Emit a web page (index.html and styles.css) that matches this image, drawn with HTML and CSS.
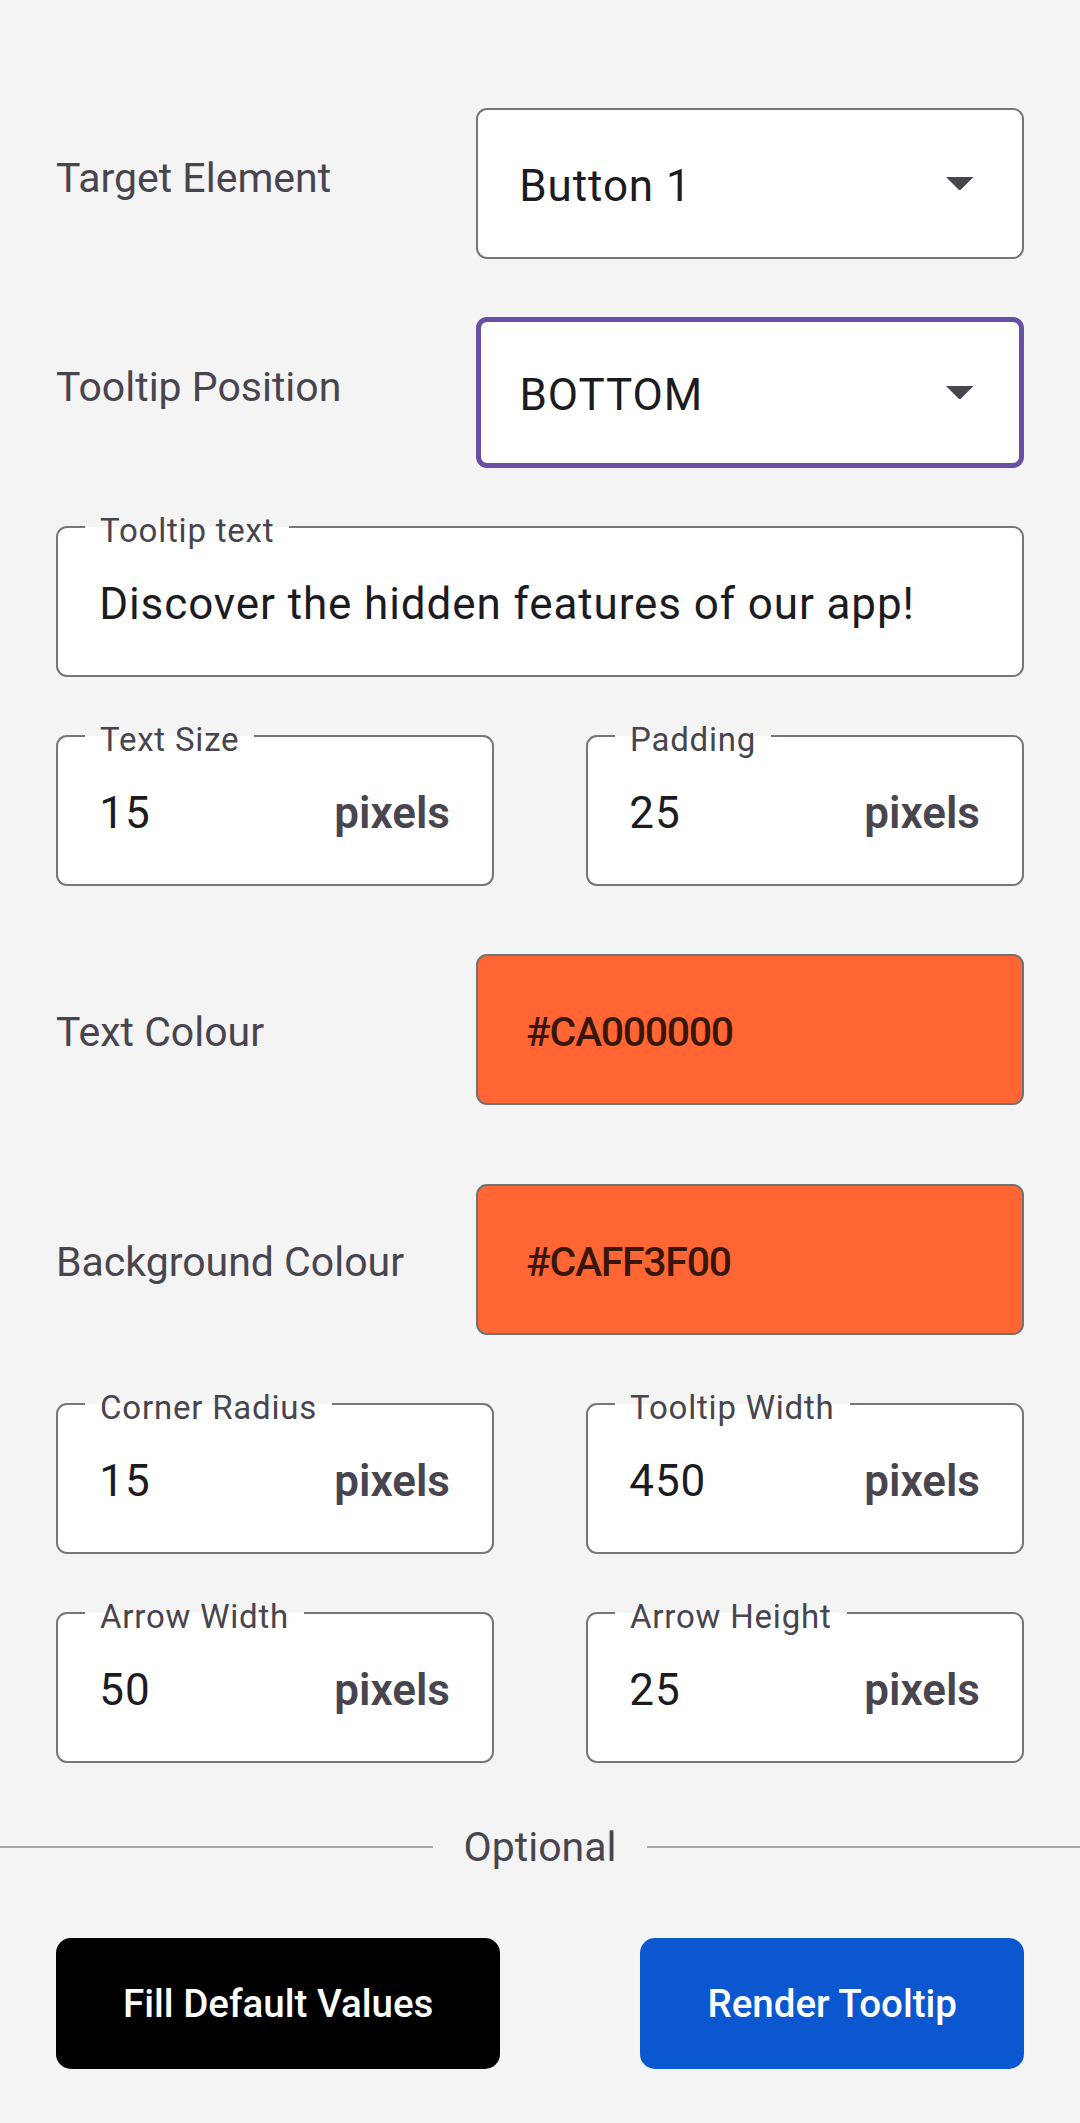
FILE: index.html
```html
<!DOCTYPE html>
<html lang="en">
<head>
<meta charset="utf-8">
<title>Tooltip Settings</title>
<link rel="stylesheet" href="styles.css">
</head>
<body>
<main class="form">
  <div class="row">
    <span class="row-label row-label--raised">Target Element</span>
    <div class="field select">
      <span class="value">Button 1</span>
      <svg class="caret" viewBox="0 0 10 5"><path d="M0 0L5 5L10 0Z"/></svg>
    </div>
  </div>

  <div class="row">
    <span class="row-label row-label--raised">Tooltip Position</span>
    <div class="field select focused">
      <span class="value">BOTTOM</span>
      <svg class="caret" viewBox="0 0 10 5"><path d="M0 0L5 5L10 0Z"/></svg>
    </div>
  </div>

  <div class="field outlined">
    <span class="float-label">Tooltip text</span>
    <span class="value">Discover the hidden features of our app!</span>
  </div>

  <div class="pair">
    <div class="field outlined">
      <span class="float-label">Text Size</span>
      <span class="value">15</span>
      <span class="suffix">pixels</span>
    </div>
    <div class="field outlined">
      <span class="float-label">Padding</span>
      <span class="value">25</span>
      <span class="suffix">pixels</span>
    </div>
  </div>

  <div class="row spaced">
    <span class="row-label row-label--lowered">Text Colour</span>
    <div class="field select swatch">
      <span class="value">#CA000000</span>
    </div>
  </div>

  <div class="row spaced-lg">
    <span class="row-label row-label--lowered">Background Colour</span>
    <div class="field select swatch">
      <span class="value">#CAFF3F00</span>
    </div>
  </div>

  <div class="pair spaced">
    <div class="field outlined">
      <span class="float-label">Corner Radius</span>
      <span class="value">15</span>
      <span class="suffix">pixels</span>
    </div>
    <div class="field outlined">
      <span class="float-label">Tooltip Width</span>
      <span class="value">450</span>
      <span class="suffix">pixels</span>
    </div>
  </div>

  <div class="pair">
    <div class="field outlined">
      <span class="float-label">Arrow Width</span>
      <span class="value">50</span>
      <span class="suffix">pixels</span>
    </div>
    <div class="field outlined">
      <span class="float-label">Arrow Height</span>
      <span class="value">25</span>
      <span class="suffix">pixels</span>
    </div>
  </div>

  <div class="divider">
    <span class="rule"></span>
    <span class="divider-text">Optional</span>
    <span class="rule"></span>
  </div>

  <div class="actions">
    <button class="btn btn-dark" type="button">Fill Default Values</button>
    <button class="btn btn-primary" type="button">Render Tooltip</button>
  </div>
</main>
</body>
</html>
```

FILE: styles.css
```css
html, body {
  margin: 0;
  background: #F4F4F4;
}

body {
  font-family: Roboto, "Noto Sans", "Liberation Sans", sans-serif;
  color: #1C1B1F;
}

.form {
  padding: 108px 56px 53px;
  display: flex;
  flex-direction: column;
}

.form > * + * {
  margin-top: 58px;
}

.form > .spaced {
  margin-top: 68px;
}

.form > .spaced-lg {
  margin-top: 79px;
}

.row {
  display: flex;
  align-items: center;
}

.row-label {
  flex: 1;
  font-size: 41px;
  line-height: 48px;
  letter-spacing: 0;
  color: #49454F;
}

.row-label--raised {
  margin-bottom: 11px;
}

.row-label--lowered {
  margin-top: 5px;
}

.field {
  position: relative;
  box-sizing: border-box;
  height: 151px;
  border: 2.75px solid #79747E;
  border-radius: 11px;
  background: #FFFFFF;
  display: flex;
  align-items: center;
  padding: 4px 42px 0 41.25px;
}

.select {
  width: 548px;
  flex: none;
  padding-right: 48.25px;
}

.focused {
  border: 5.5px solid #6750A4;
  padding-left: 38.5px;
  padding-right: 45.5px;
}

.value {
  flex: 1;
  font-size: 44px;
  line-height: 52px;
  letter-spacing: 0.9px;
  color: #1C1B1F;
  white-space: nowrap;
}

.caret {
  width: 27.5px;
  height: 13.75px;
  fill: #49454F;
  margin-top: -4px;
}

.float-label {
  position: absolute;
  left: 27px;
  top: -14.5px;
  padding: 0 15px;
  font-size: 33px;
  line-height: 33px;
  letter-spacing: 0.8px;
  color: #49454F;
  background: linear-gradient(#F4F4F4 13px, #FFFFFF 13px);
}

.suffix {
  font-size: 44px;
  line-height: 52px;
  font-weight: 600;
  color: #49454F;
}

.pair {
  display: grid;
  grid-template-columns: 1fr 1fr;
  column-gap: 92px;
}

.swatch {
  background: #FF6633;
  border-color: #727272;
  padding-left: 48px;
}

.swatch .value {
  font-size: 41px;
  font-weight: 500;
  letter-spacing: -1.3px;
  color: rgba(0, 0, 0, 0.79);
}

.form > .divider {
  margin: 60px -56px 0;
  height: 48px;
  display: flex;
  align-items: center;
  gap: 31px;
}

.rule {
  flex: 1;
  height: 2.75px;
  background: #A6A6A6;
}

.divider-text {
  font-size: 41px;
  line-height: 48px;
  letter-spacing: 0;
  color: #49454F;
}

.form > .actions {
  margin-top: 67px;
  display: flex;
  justify-content: space-between;
}

.btn {
  height: 131px;
  padding: 0 67px;
  border: none;
  border-radius: 15px;
  font-family: Roboto, "Noto Sans", sans-serif;
  font-size: 38.5px;
  font-weight: 500;
  letter-spacing: 0;
  color: #FFFFFF;
  cursor: pointer;
}

.btn-dark {
  background: #000000;
}

.btn-primary {
  background: #0B57D0;
}
```
